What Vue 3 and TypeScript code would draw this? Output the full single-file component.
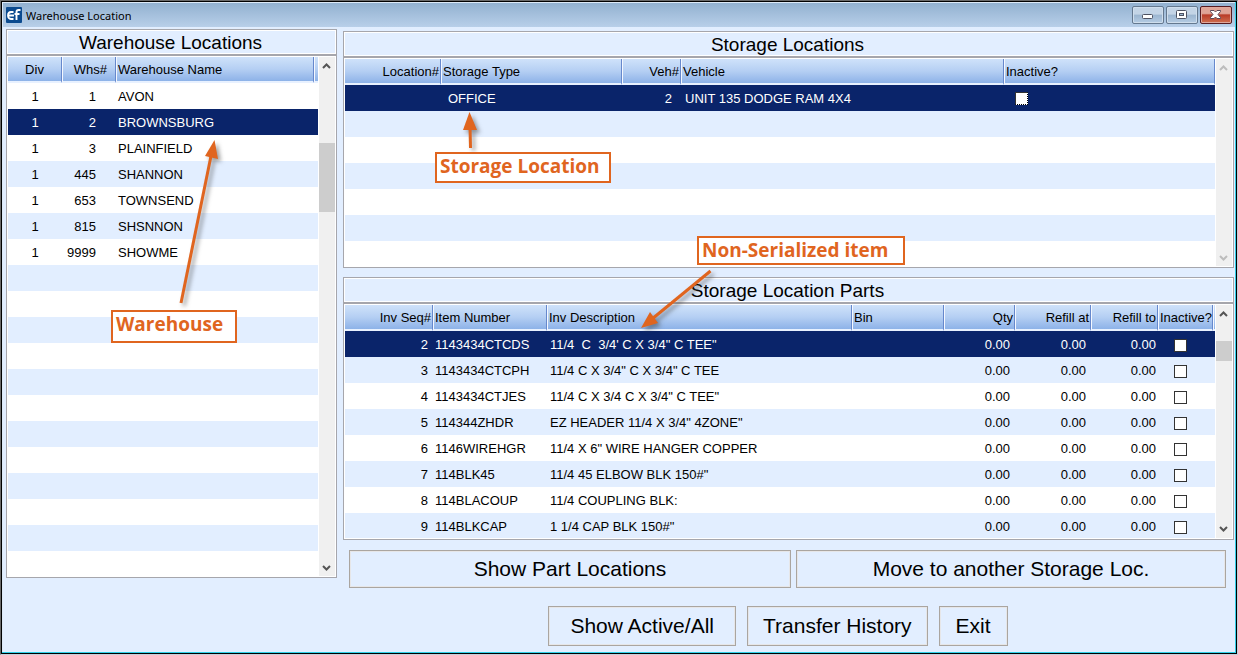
<script setup lang="ts">
interface Warehouse { div: number; whs: number; name: string }
interface StorageLoc { location: string; type: string; veh: number; vehicle: string; inactive: boolean }
interface Part { seq: number; item: string; desc: string; bin: string; qty: string; refillAt: string; refillTo: string; inactive: boolean }

const warehouses: Warehouse[] = [
  { div: 1, whs: 1, name: 'AVON' },
  { div: 1, whs: 2, name: 'BROWNSBURG' },
  { div: 1, whs: 3, name: 'PLAINFIELD' },
  { div: 1, whs: 445, name: 'SHANNON' },
  { div: 1, whs: 653, name: 'TOWNSEND' },
  { div: 1, whs: 815, name: 'SHSNNON' },
  { div: 1, whs: 9999, name: 'SHOWME' },
]
const selectedWhs = 2

const storage: StorageLoc[] = [
  { location: '', type: 'OFFICE', veh: 2, vehicle: 'UNIT 135 DODGE RAM 4X4', inactive: false },
]

const part = (seq: number, item: string, desc: string): Part => ({
  seq, item, desc, bin: '', qty: '0.00', refillAt: '0.00', refillTo: '0.00', inactive: false,
})
const parts: Part[] = [
  part(2, '1143434CTCDS', '11/4  C  3/4\' C X 3/4" C TEE"'),
  part(3, '1143434CTCPH', '11/4 C X 3/4" C X 3/4" C TEE'),
  part(4, '1143434CTJES', '11/4 C X 3/4 C X 3/4" C TEE"'),
  part(5, '114344ZHDR', 'EZ HEADER 11/4 X 3/4" 4ZONE"'),
  part(6, '1146WIREHGR', '11/4 X 6" WIRE HANGER COPPER'),
  part(7, '114BLK45', '11/4 45 ELBOW BLK 150#"'),
  part(8, '114BLACOUP', '11/4 COUPLING BLK:'),
  part(9, '114BLKCAP', '1 1/4 CAP BLK 150#"'),
]
const selectedSeq = 2

const whsScroll = { before: 69, thumb: 69, after: 347 }
const partScroll = { before: 19, thumb: 20, after: 159 }
</script>

<template>
  <div class="window">
    <header class="titlebar">
      <svg class="logo" viewBox="0 0 16 16" aria-hidden="true">
        <rect width="16" height="16" rx="1" fill="#0b4a8f" />
        <path d="M7.500 5H5Q2 5.200 2 8.400T5 12H7.500M2 8.500H8" fill="none" stroke="#fff" stroke-width="1.800" />
        <path d="M10.500 13V5Q10.500 3 12.500 3H14.500M8.500 7H13.500" fill="none" stroke="#fff" stroke-width="1.900" />
      </svg>
      <h1>Warehouse Location</h1>
      <div class="winbtns">
        <button type="button" class="wb" aria-label="Minimize">
          <svg viewBox="0 0 12 12"><rect x="0.500" y="5.500" width="10" height="4" rx="1" fill="#fff" stroke="#4d5262" /></svg>
        </button>
        <button type="button" class="wb" aria-label="Maximize">
          <svg viewBox="0 0 12 12"><rect x="0.500" y="1.500" width="10" height="8" rx="1" fill="#fff" stroke="#4d5262" /><rect x="3.500" y="4.500" width="4" height="2" fill="#9db8d2" stroke="#4d5262" /></svg>
        </button>
        <button type="button" class="wb close" aria-label="Close">
          <svg viewBox="0 0 12 12"><path d="M0.500 1.500H4L5.500 3L7 1.500H10.500V2.500L8 5.500L10.500 8.500V9.500H7L5.500 8L4 9.500H0.500V8.500L3 5.500L0.500 2.500Z" fill="#fff" stroke="#5c4a58" /></svg>
        </button>
      </div>
    </header>

    <main>
      <div class="columns">
        <section class="panel left">
          <h2>Warehouse Locations</h2>
          <div class="list">
            <div class="rows">
              <table class="whs">
                <thead><tr><th>Div</th><th>Whs#</th><th>Warehouse Name</th><th></th></tr></thead>
                <tbody>
                  <tr v-for="w in warehouses" :key="w.whs" :class="{ sel: w.whs === selectedWhs }">
                    <td>{{ w.div }}</td><td>{{ w.whs }}</td><td>{{ w.name }}</td><td></td>
                  </tr>
                </tbody>
              </table>
            </div>
            <div class="scroll">
              <button type="button" aria-label="Scroll warehouses up"><svg viewBox="0 0 10 6"><path d="M1 5L4.500 1.500L8 5" /></svg></button>
              <span :style="{ flexGrow: whsScroll.before }"></span>
              <span class="thumb" :style="{ flexGrow: whsScroll.thumb }"></span>
              <span :style="{ flexGrow: whsScroll.after }"></span>
              <button type="button" aria-label="Scroll warehouses down"><svg viewBox="0 0 10 6"><path d="M1 1L4.500 4.500L8 1" /></svg></button>
            </div>
          </div>
        </section>

        <div class="right">
          <section class="panel storage">
            <h2>Storage Locations</h2>
            <div class="list">
              <div class="rows">
                <table class="stor">
                  <thead><tr><th>Location#</th><th>Storage Type</th><th>Veh#</th><th>Vehicle</th><th>Inactive?</th></tr></thead>
                  <tbody>
                    <tr v-for="(s, i) in storage" :key="i" class="sel">
                      <td>{{ s.location }}</td><td>{{ s.type }}</td><td>{{ s.veh }}</td><td>{{ s.vehicle }}</td>
                      <td><input type="checkbox" class="focused" :checked="s.inactive" :aria-label="'Inactive ' + s.type"></td>
                    </tr>
                  </tbody>
                </table>
              </div>
              <div class="scroll">
                <button type="button" disabled aria-label="Scroll storage up"><svg viewBox="0 0 10 6"><path d="M1 5L4.500 1.500L8 5" /></svg></button>
                <span class="fill"></span>
                <button type="button" disabled aria-label="Scroll storage down"><svg viewBox="0 0 10 6"><path d="M1 1L4.500 4.500L8 1" /></svg></button>
              </div>
            </div>
          </section>

          <section class="panel parts-panel">
            <h2>Storage Location Parts</h2>
            <div class="list">
              <div class="rows">
                <table class="parts">
                  <thead>
                    <tr><th>Inv Seq#</th><th>Item Number</th><th>Inv Description</th><th>Bin</th><th>Qty</th><th>Refill at</th><th>Refill to</th><th>Inactive?</th><th></th></tr>
                  </thead>
                  <tbody>
                    <tr v-for="p in parts" :key="p.seq" :class="{ sel: p.seq === selectedSeq }">
                      <td>{{ p.seq }}</td><td>{{ p.item }}</td><td>{{ p.desc }}</td><td>{{ p.bin }}</td>
                      <td>{{ p.qty }}</td><td>{{ p.refillAt }}</td><td>{{ p.refillTo }}</td>
                      <td><input type="checkbox" :checked="p.inactive" :aria-label="'Inactive ' + p.item"></td><td></td>
                    </tr>
                  </tbody>
                </table>
              </div>
              <div class="scroll">
                <button type="button" aria-label="Scroll parts up"><svg viewBox="0 0 10 6"><path d="M1 5L4.500 1.500L8 5" /></svg></button>
                <span :style="{ flexGrow: partScroll.before }"></span>
                <span class="thumb" :style="{ flexGrow: partScroll.thumb }"></span>
                <span :style="{ flexGrow: partScroll.after }"></span>
                <button type="button" aria-label="Scroll parts down"><svg viewBox="0 0 10 6"><path d="M1 1L4.500 4.500L8 1" /></svg></button>
              </div>
            </div>
          </section>

          <div class="actions">
            <button type="button" class="btn">Show Part Locations</button>
            <button type="button" class="btn">Move to another Storage Loc.</button>
          </div>
        </div>
      </div>

      <footer>
        <button type="button" class="btn">Show Active/All</button>
        <button type="button" class="btn">Transfer History</button>
        <button type="button" class="btn">Exit</button>
      </footer>
    </main>

    <svg class="arrows" width="1238" height="655" aria-hidden="true">
      <g fill="#e0651f" stroke="#e0651f">
        <path d="M470.500 148L470 126" stroke-width="3" fill="none" />
        <path d="M469.500 112L477 130L463 130Z" stroke="none" />
        <path d="M181 303L211 156" stroke-width="3" fill="none" />
        <path d="M214.500 140L218 159L205 156Z" stroke="none" />
        <path d="M710.500 271L652 319" stroke-width="3" fill="none" />
        <path d="M641 328L650 312L658 323Z" stroke="none" />
      </g>
    </svg>
    <div class="callout c-storage">Storage Location</div>
    <div class="callout c-item">Non-Serialized item</div>
    <div class="callout c-whs">Warehouse</div>
  </div>
</template>

<style>
body { background: #6a6a6a; }
</style>

<style scoped>
* { box-sizing: border-box; }
.window {
  position: relative;
  display: flex;
  flex-direction: column;
  height: 100vh;
  min-height: 560px;
  overflow: hidden;
  border: 1px solid #6a6a6a;
  border-right-color: #c4d0dc;
  border-bottom-color: #c4d0dc;
  background: #e2eeff;
  box-shadow: inset 1px 1px #000, inset -1px -1px #000, inset -2px -2px #2fd0e8, inset 2px 2px #dce9f7;
  font: 13px/16px "Liberation Sans", Arial, sans-serif;
  color: #000;
}
.titlebar {
  display: flex;
  align-items: center;
  height: 24px;
  margin: 2px 2px 0;
  padding: 0 3px;
  background: linear-gradient(#92b1d0, #b8cfe9);
}
.logo { width: 16px; height: 16px; }
h1 {
  flex: 1;
  margin: 0 0 0 4px;
  padding-top: 1px;
  font: 11px/16px "Noto Sans", "Open Sans", sans-serif;
}
.winbtns { display: flex; gap: 2px; }
.wb {
  display: flex;
  align-items: center;
  justify-content: center;
  width: 32px;
  height: 18px;
  padding: 0;
  border: 1px solid #64788f;
  border-radius: 2px;
  background: linear-gradient(#c3d4e6 0 45%, #9bb5d0 50%, #b5cce4);
  box-shadow: inset 0 0 0 1px #cfdeed;
}
.wb svg { width: 12px; height: 12px; }
.close {
  border-color: #561a20;
  background: linear-gradient(#dfa497 0 40%, #b93c28 50%, #cf6f50);
  box-shadow: inset 0 0 0 1px #dfa79c;
}
main {
  flex: 1;
  min-height: 0;
  display: flex;
  flex-direction: column;
  gap: 18px;
  padding: 2px 3px 8px 5px;
}
.columns {
  flex: 1;
  min-height: 0;
  display: grid;
  grid-template-columns: 331fr 891fr;
  gap: 6px;
}
.panel { display: flex; flex-direction: column; min-height: 0; }
.left { padding-bottom: 10px; }
.right { display: flex; flex-direction: column; min-height: 0; padding-top: 2px; }
.storage { flex: 237 0 0; }
.parts-panel { flex: 263 0 0; margin-top: 9px; }
h2 {
  margin: 0;
  padding-right: 2px;
  height: 26px;
  flex: none;
  border: 1px solid #a6a6ac;
  box-shadow: inset 0 0 0 1px #fff;
  text-align: center;
  font-size: 19px;
  font-weight: 400;
  line-height: 25px;
}
.list {
  flex: 1;
  min-height: 0;
  display: flex;
  gap: 1px;
  padding: 1px;
  border: 1px solid #a6a6ac;
  background: #fff;
}
.rows {
  flex: 1;
  min-width: 0;
  overflow: hidden;
  background: repeating-linear-gradient(#e2eeff 0 26px, #fff 26px 52px);
}
table { width: 100%; table-layout: fixed; border-collapse: separate; border-spacing: 0; }
tr { height: 26px; }
th {
  height: 26px;
  padding: 2px 1px 0;
  border-bottom: 2px solid #e8f1ff;
  border-right: 1px solid #6688cc;
  border-left: 1px solid #f4f8ff;
  background: linear-gradient(#cfe2fa, #b5cff3 50%, #8db2e8);
  text-align: left;
  font-weight: 400;
  white-space: nowrap;
}
th:first-child { border-left: 0; }
th:last-child { border-right: 0; }
td { height: 26px; padding: 2px 4px 0; white-space: pre; overflow: hidden; }
.sel { background: #0a246a; color: #fff; }

.whs th:nth-child(1) { width: 54px; text-align: center; }
.whs th:nth-child(2) { width: 54px; text-align: right; padding-right: 8px; }
.whs th:nth-child(4) { width: 4px; padding: 0; }
.whs td:nth-child(1) { text-align: center; }
.whs td:nth-child(2) { text-align: right; padding-right: 20px; }
.whs td:nth-child(3) { padding-left: 2px; }
.whs td:nth-child(4) { padding: 0; }

.stor th:nth-child(1) { width: 96px; text-align: right; }
.stor th:nth-child(2) { width: 181px; }
.stor th:nth-child(3) { width: 59px; text-align: right; }
.stor th:nth-child(5) { width: 211px; border-right: 1px solid #6688cc; }
.stor td:nth-child(2) { padding-left: 7px; }
.stor td:nth-child(3) { text-align: right; padding-right: 9px; }
.stor td:nth-child(5) { padding: 0 0 0 11px; }

.parts th:nth-child(1) { width: 88px; text-align: right; }
.parts th:nth-child(2) { width: 114px; }
.parts th:nth-child(4) { width: 92px; }
.parts th:nth-child(5) { width: 71px; text-align: right; }
.parts th:nth-child(6) { width: 76px; text-align: right; }
.parts th:nth-child(7) { width: 67px; text-align: right; }
.parts th:nth-child(8) { width: 55px; padding-right: 0; }
.parts th:nth-child(9) { width: 2px; padding: 0; }
.parts td:nth-child(1) { text-align: right; padding-right: 5px; }
.parts td:nth-child(2) { padding-left: 2px; }
.parts td:nth-child(3) { padding-left: 3px; }
.parts td:nth-child(5), .parts td:nth-child(6) { text-align: right; padding-right: 5px; }
.parts td:nth-child(7) { text-align: right; padding-right: 2px; }
.parts td:nth-child(8) { padding-left: 16px; }
.parts td:nth-child(9) { padding: 0; }

input[type="checkbox"] {
  appearance: none;
  display: block;
  width: 13px;
  height: 13px;
  margin: 0;
  border: 1px solid #333;
  background: #fff;
}
input.focused { border-right: 1px dotted #000; border-bottom: 1px dotted #000; }

.scroll { display: flex; flex-direction: column; width: 16px; background: #f0f0f0; }
.scroll span { flex: 1 1 0; }
.scroll .thumb { background: #cdcdcd; }
.scroll button {
  display: flex;
  align-items: center;
  justify-content: center;
  height: 17px;
  padding: 0;
  border: 0;
  background: none;
}
.scroll svg { width: 10px; height: 6px; fill: none; stroke: #555; stroke-width: 2; }
.scroll button:disabled svg { stroke: #bdbdbd; }

.actions { display: grid; grid-template-columns: 442fr 430fr; gap: 5px; padding: 10px 8px 0 6px; }
.btn {
  height: 38px;
  padding: 0 15px;
  border: 1px solid #aaa5a0;
  background: #e2eeff;
  box-shadow: inset 0 0 0 1px #e6e6e8;
  font: 21px/24px "Liberation Sans", Arial, sans-serif;
  color: #000;
}
footer { display: flex; justify-content: center; gap: 11px; padding-left: 316px; }
footer .btn { height: 40px; }
footer .btn:first-child { padding: 0 21px; }
footer .btn:last-child { padding: 0 16px; }

.arrows { position: absolute; left: -1px; top: -1px; pointer-events: none; filter: drop-shadow(3px 3px 2px rgba(60, 60, 60, 0.5)); }
.callout {
  position: absolute;
  border: 2px solid #e0651f;
  background: #fff;
  color: #e0651f;
  padding: 0 3px;
  font: 700 19px/25px "Open Sans", "Noto Sans", sans-serif;
  white-space: nowrap;
}
.c-storage { left: 434px; top: 151px; width: 176px; height: 31px; }
.c-item { left: 696px; top: 235px; width: 208px; height: 29px; }
.c-whs { left: 110px; top: 309px; width: 126px; height: 33px; }
</style>
